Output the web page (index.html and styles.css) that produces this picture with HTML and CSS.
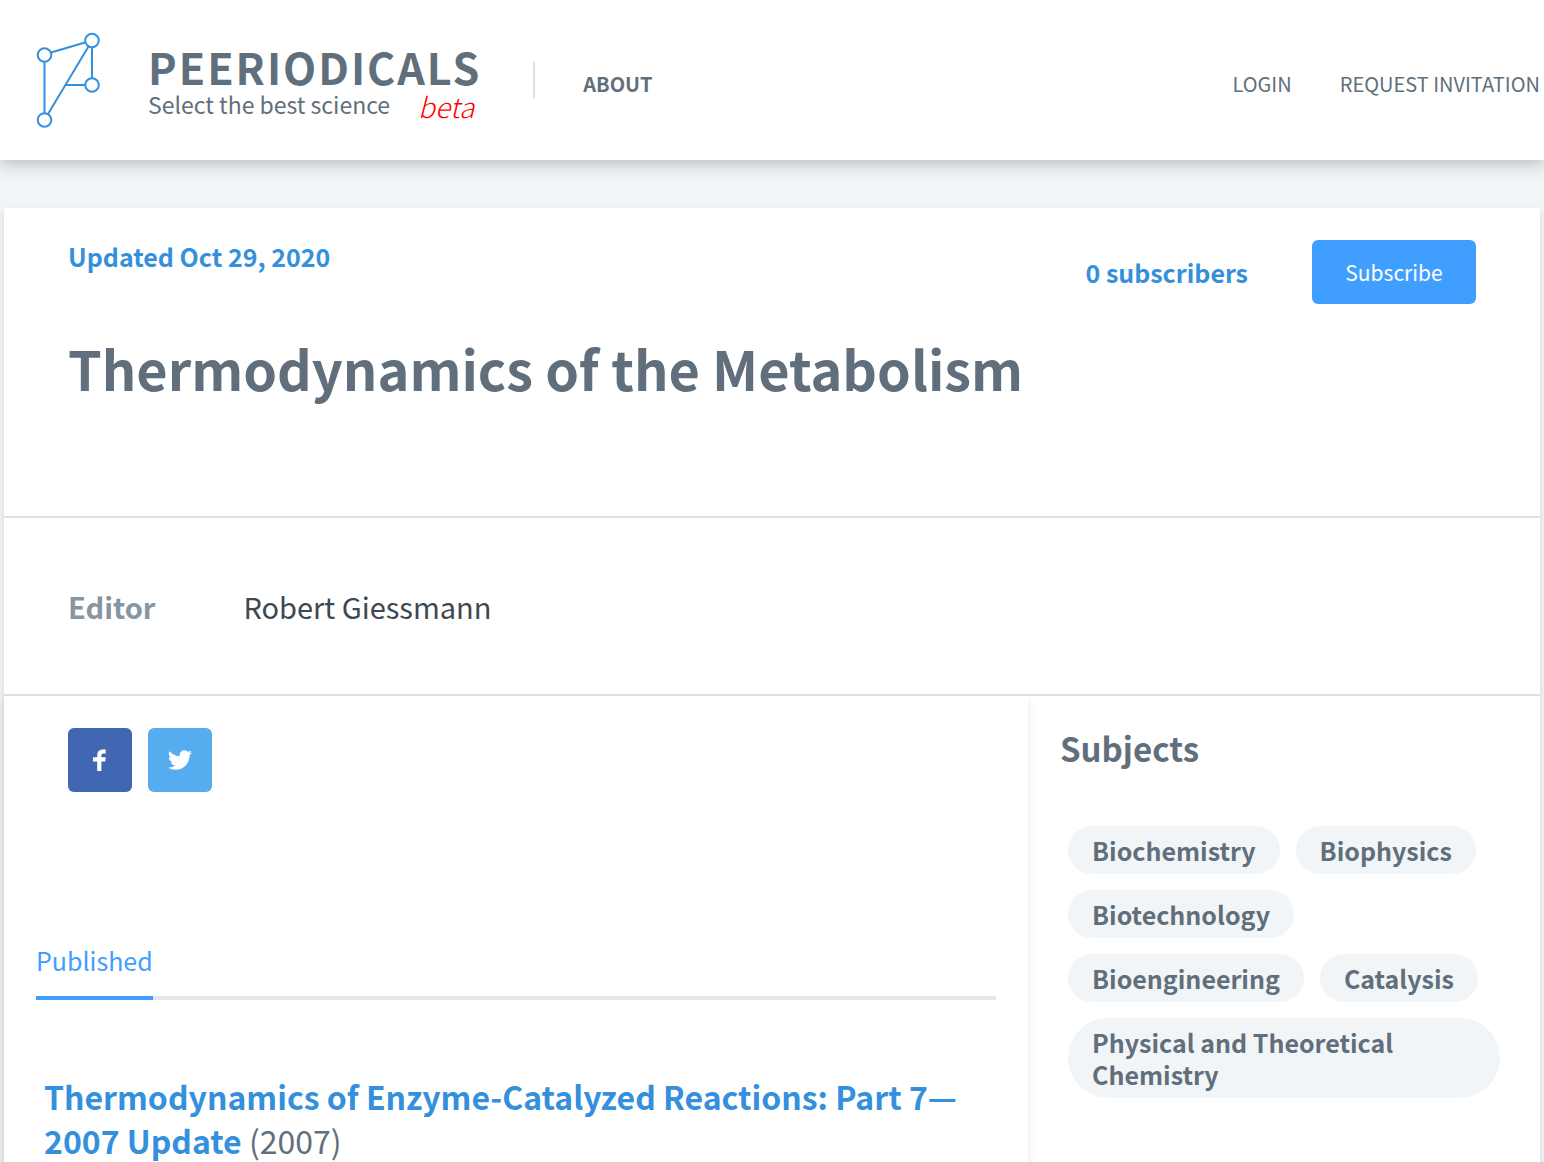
FILE: index.html
```html
<!DOCTYPE html>
<html lang="en">
<head>
<meta charset="utf-8">
<meta name="viewport" content="width=device-width, initial-scale=1">
<title>Thermodynamics of the Metabolism - Peeriodicals</title>
<link rel="stylesheet" href="styles.css">
</head>
<body>
<header class="site-header">
  <a class="brand" href="#">
    <svg class="brand-mark" viewBox="0 0 64 96" width="64" height="96" fill="none" stroke="currentColor" stroke-width="2" aria-hidden="true">
      <path d="M15 20.500 49 10.500M8.500 30V81M12 82 52.500 14.500M56 15.500V46M29.500 53H49"/>
      <circle cx="8.500" cy="23" r="6.800"/><circle cx="56" cy="8.500" r="6.800"/><circle cx="56" cy="53" r="6.800"/><circle cx="8.500" cy="88" r="6.800"/>
    </svg>
    <span class="brand-text">
      <span class="brand-name">PEERIODICALS</span>
      <span class="brand-line">Select the best science <span class="beta">beta</span></span>
    </span>
  </a>
  <nav class="main-nav"><a href="#">ABOUT</a></nav>
  <nav class="user-nav"><a href="#">LOGIN</a><a href="#">REQUEST INVITATION</a></nav>
</header>
<main class="journal">
  <section class="hero">
    <div class="hero-bar">
      <p class="updated">Updated Oct 29, 2020</p>
      <div class="subscription"><span>0 subscribers</span><button class="subscribe" type="button">Subscribe</button></div>
    </div>
    <h1>Thermodynamics of the Metabolism</h1>
  </section>
  <dl class="editor"><dt>Editor</dt><dd>Robert Giessmann</dd></dl>
  <div class="columns">
    <section class="content">
      <div class="share">
        <a class="share-link facebook" href="#" aria-label="Share on Facebook"><svg viewBox="0 0 24 24" width="24" height="24" fill="currentColor"><path d="M9.200 23V13.500H5V9.200H9.200V7.500C9.200 3.500 11.500 1.500 15 1.500H17.700V5.500H15.500C14 5.500 13.400 6.200 13.400 7.500V9.200H17.700L17.200 13.500H13.400V23Z"/></svg></a>
        <a class="share-link twitter" href="#" aria-label="Share on Twitter"><svg viewBox="0 0 24 24" width="24" height="24" fill="currentColor"><path d="M23.950 4.570a10 10 0 0 1-2.820.770 4.960 4.960 0 0 0 2.160-2.720c-.950.550-2 .950-3.130 1.180a4.920 4.920 0 0 0-8.380 4.480C7.690 8.090 4.070 6.130 1.640 3.160a4.920 4.920 0 0 0 1.520 6.570 4.900 4.900 0 0 1-2.230-.610v.060a4.920 4.920 0 0 0 3.950 4.830 5 5 0 0 1-2.210.080 4.940 4.940 0 0 0 4.600 3.420A9.870 9.870 0 0 1 0 19.540a13.990 13.990 0 0 0 7.550 2.210c9.050 0 14-7.500 14-13.980 0-.210 0-.420-.020-.630a9.940 9.940 0 0 0 2.460-2.550z"/></svg></a>
      </div>
      <nav class="tabs"><a class="tab" href="#">Published</a></nav>
      <article class="paper"><h2><a href="#">Thermodynamics of Enzyme-Catalyzed Reactions: Part 7—2007 Update</a> <span class="year">(2007)</span></h2></article>
    </section>
    <aside class="sidebar">
      <h2>Subjects</h2>
      <ul class="subjects"><li>Biochemistry</li><li>Biophysics</li><li>Biotechnology</li><li>Bioengineering</li><li>Catalysis</li><li>Physical and Theoretical Chemistry</li></ul>
    </aside>
  </div>
</main>
</body>
</html>
```
FILE: styles.css
```css
* { box-sizing: border-box; }
body { margin: 0; background: #f1f5f8; color: #606f7b; font-family: "Noto Sans CJK SC", "Noto Sans", sans-serif; font-size: 25px; line-height: 32px; }
a { color: inherit; text-decoration: none; }
h1, h2, p, ul, dl, dd { margin: 0; padding: 0; }

.site-header { display: flex; align-items: center; height: 160px; padding: 0 4px 0 36px; background: #fff; box-shadow: 0 8px 16px rgba(0,0,0,.12), 0 4px 8px rgba(0,0,0,.08); font-size: 20px; line-height: 28px; }
.brand { display: flex; align-items: center; }
.brand-mark { color: #3490dc; }
.brand-text { display: flex; flex-direction: column; margin-left: 48px; padding-top: 4px; }
.brand-name { font-size: 43px; line-height: 44px; font-weight: 700; letter-spacing: 2px; }
.brand-line { display: flex; align-items: center; gap: 28px; height: 32px; font-size: 23px; line-height: 32px; }
.beta { padding-top: 4px; color: #f00; font-size: 28px; font-style: italic; font-weight: 300; }
.main-nav { margin-left: 52px; padding: 8px 0 0 48px; border-left: 2px solid #dae1e7; font-weight: 700; }
.user-nav { display: flex; gap: 48px; margin-left: auto; padding-top: 8px; }

.journal { margin: 48px 4px 0; background: #fff; box-shadow: 0 4px 8px rgba(0,0,0,.12); }
.hero { padding: 32px 64px 112px; }
.hero-bar { display: flex; justify-content: space-between; color: #3490dc; font-weight: 700; }
.subscription { display: flex; align-items: center; gap: 64px; }
.subscribe { width: 164px; height: 64px; border: 0; border-radius: 6px; background: #409eff; color: #fff; font: inherit; font-weight: 400; font-size: 21px; }
h1 { margin-top: 28px; font-size: 54px; line-height: 72px; }
.editor { display: flex; gap: 88px; padding: 72px 64px; border: solid #dae1e7; border-width: 2px 0; font-size: 29px; }
dt { font-weight: 700; color: #8795a1; }
dd { color: #3d4852; }

.columns { display: grid; grid-template-columns: 2fr 1fr; }
.content { padding: 32px; box-shadow: 0 4px 8px rgba(0,0,0,.1); }
.share { display: flex; gap: 16px; padding-left: 32px; }
.share-link { display: grid; place-items: center; width: 64px; height: 64px; border-radius: 6px; color: #fff; }
.facebook { background: #4267b2; }
.twitter { background: #55acee; }
.tabs { display: flex; margin-top: 144px; border-bottom: 4px solid #e4e7ed; color: #409eff; }
.tab { margin-bottom: -4px; padding: 8px 0 20px; border-bottom: 4px solid #409eff; }
.paper { padding: 74px 8px 0; }
.paper h2 { font-size: 32px; line-height: 44px; }
.paper a { color: #3490dc; }
.year { font-weight: 400; }

.sidebar { padding: 32px; }
.sidebar h2 { font-size: 33px; line-height: 40px; }
.subjects { display: flex; flex-wrap: wrap; gap: 16px; margin: 58px 8px 0; list-style: none; font-weight: 700; }
.subjects li { padding: 8px 24px; border-radius: 40px; background: #f1f5f8; }
```
